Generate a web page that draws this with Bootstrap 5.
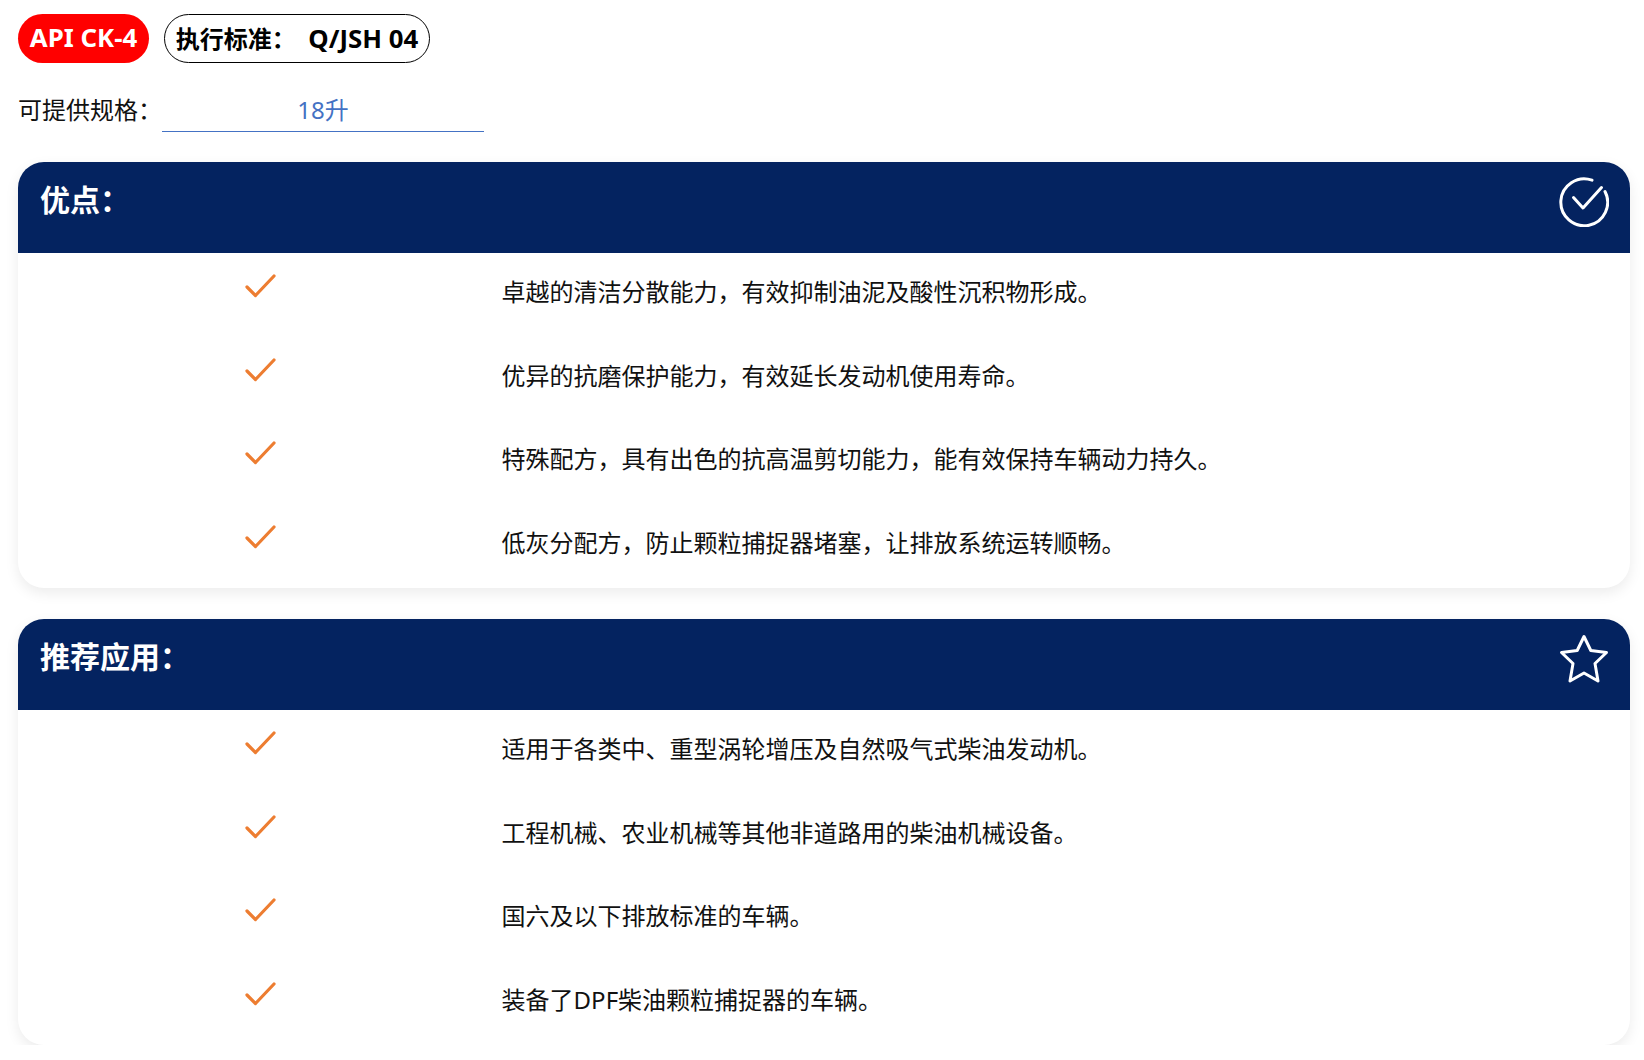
<!doctype html>
<html lang="zh">
<head>
<meta charset="utf-8">
<title>API CK-4</title>
<link href="https://cdn.jsdelivr.net/npm/bootstrap@5.3.0/dist/css/bootstrap.min.css" rel="stylesheet">
<style>
body{font-family:"Noto Sans","Noto Sans CJK SC",sans-serif;font-size:24px;color:#111;background:#fff}
.sheet{padding:14px 14px 0 18px}
.tag{height:49px;border-radius:25px;font-size:24px;font-weight:700;line-height:47px}
.tag-latin{font-size:25.800px}
.tag-red{width:131px;background:#f00;color:#fff;text-align:center;white-space:nowrap}
.tag-line{width:266px;border:1px solid #000;color:#000;text-align:center;white-space:pre;margin-left:-1px}
.spec{margin-top:20px;height:49px}
.spec-label{width:144px;padding-top:5px;line-height:44px}
.spec-value{width:322px;height:49px;padding-top:5px;line-height:44px;text-align:center;color:#4472c4;border-bottom:1px solid #4472c4}
.panel{border:0;border-radius:26px;background:#fff;box-shadow:0 5px 14px rgba(0,0,0,.08);overflow:hidden;--bs-card-bg:#fff}
.panel-a{margin-top:30px;height:426px}
.panel-b{margin-top:31px;height:426px}
.panel-head{height:91px;background:#042360;color:#fff;padding:16px 21px 0 22px;font-size:30px;font-weight:700;line-height:44px}
.panel-icon{width:50px;height:50px;margin-top:-1px}
.item{height:83.6px}
.item-mark{width:30%;padding-top:19px}
.item-text{flex:1;padding-top:21px;line-height:36px}
.tick{width:32px;height:27px;display:block;margin-left:1px}
</style>
</head>
<body>
<div class="sheet">
  <div class="d-flex gap-3 align-items-start">
    <div class="tag tag-red"><span class="tag-latin">API CK-4</span></div>
    <div class="tag tag-line">执行标准：  <span class="tag-latin">Q/JSH 04</span></div>
  </div>
  <div class="spec d-flex">
    <div class="spec-label">可提供规格：</div>
    <div class="spec-value">18升</div>
  </div>

  <div class="card panel panel-a">
    <div class="panel-head d-flex justify-content-between align-items-start">
      <span>优点：</span>
      <svg class="panel-icon" viewBox="0 0 50 50" fill="none" stroke="#fff" stroke-width="3" stroke-linecap="round" stroke-linejoin="round"><path d="M33 3.200A23.400 23.400 0 1 0 46 14.500"/><path d="M14.500 20.500 24 31 42.500 10.500"/></svg>
    </div>
    <div class="d-flex item"><div class="item-mark d-flex justify-content-center"><svg class="tick" viewBox="0 0 32 27" fill="none" stroke="#ed7d31" stroke-width="3.200" stroke-linecap="round" stroke-linejoin="round"><path d="M3 15 11.500 23.500 30 4"/></svg></div><div class="item-text">卓越的清洁分散能力，有效抑制油泥及酸性沉积物形成。</div></div>
    <div class="d-flex item"><div class="item-mark d-flex justify-content-center"><svg class="tick" viewBox="0 0 32 27" fill="none" stroke="#ed7d31" stroke-width="3.200" stroke-linecap="round" stroke-linejoin="round"><path d="M3 15 11.500 23.500 30 4"/></svg></div><div class="item-text">优异的抗磨保护能力，有效延长发动机使用寿命。</div></div>
    <div class="d-flex item"><div class="item-mark d-flex justify-content-center"><svg class="tick" viewBox="0 0 32 27" fill="none" stroke="#ed7d31" stroke-width="3.200" stroke-linecap="round" stroke-linejoin="round"><path d="M3 15 11.500 23.500 30 4"/></svg></div><div class="item-text">特殊配方，具有出色的抗高温剪切能力，能有效保持车辆动力持久。</div></div>
    <div class="d-flex item"><div class="item-mark d-flex justify-content-center"><svg class="tick" viewBox="0 0 32 27" fill="none" stroke="#ed7d31" stroke-width="3.200" stroke-linecap="round" stroke-linejoin="round"><path d="M3 15 11.500 23.500 30 4"/></svg></div><div class="item-text">低灰分配方，防止颗粒捕捉器堵塞，让排放系统运转顺畅。</div></div>
  </div>

  <div class="card panel panel-b">
    <div class="panel-head d-flex justify-content-between align-items-start">
      <span>推荐应用：</span>
      <svg class="panel-icon" viewBox="0 0 50 50" fill="none" stroke="#fff" stroke-width="3" stroke-linecap="round" stroke-linejoin="round"><path d="M25 2.500 31.800 16.500 47.500 18.500 36 29.500 39 47 25 39 11 47 14 29.500 2.500 18.500 18.200 16.500Z"/></svg>
    </div>
    <div class="d-flex item"><div class="item-mark d-flex justify-content-center"><svg class="tick" viewBox="0 0 32 27" fill="none" stroke="#ed7d31" stroke-width="3.200" stroke-linecap="round" stroke-linejoin="round"><path d="M3 15 11.500 23.500 30 4"/></svg></div><div class="item-text">适用于各类中、重型涡轮增压及自然吸气式柴油发动机。</div></div>
    <div class="d-flex item"><div class="item-mark d-flex justify-content-center"><svg class="tick" viewBox="0 0 32 27" fill="none" stroke="#ed7d31" stroke-width="3.200" stroke-linecap="round" stroke-linejoin="round"><path d="M3 15 11.500 23.500 30 4"/></svg></div><div class="item-text">工程机械、农业机械等其他非道路用的柴油机械设备。</div></div>
    <div class="d-flex item"><div class="item-mark d-flex justify-content-center"><svg class="tick" viewBox="0 0 32 27" fill="none" stroke="#ed7d31" stroke-width="3.200" stroke-linecap="round" stroke-linejoin="round"><path d="M3 15 11.500 23.500 30 4"/></svg></div><div class="item-text">国六及以下排放标准的车辆。</div></div>
    <div class="d-flex item"><div class="item-mark d-flex justify-content-center"><svg class="tick" viewBox="0 0 32 27" fill="none" stroke="#ed7d31" stroke-width="3.200" stroke-linecap="round" stroke-linejoin="round"><path d="M3 15 11.500 23.500 30 4"/></svg></div><div class="item-text">装备了DPF柴油颗粒捕捉器的车辆。</div></div>
  </div>
</div>
<script src="https://cdn.jsdelivr.net/npm/bootstrap@5.3.0/dist/js/bootstrap.bundle.min.js"></script>
</body>
</html>
